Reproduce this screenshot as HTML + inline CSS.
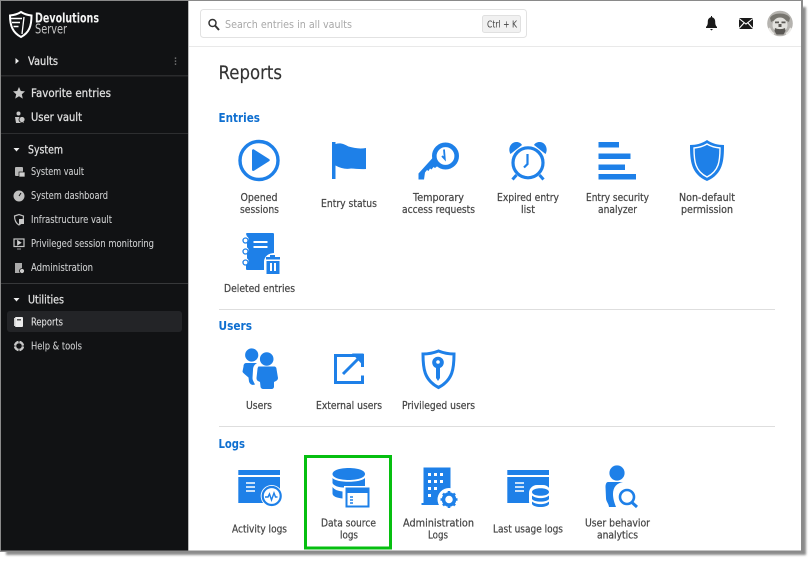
<!DOCTYPE html>
<html><head><meta charset="utf-8"><title>Reports</title>
<style>
html,body{margin:0;padding:0;background:#fff;width:812px;height:561px;overflow:hidden}
svg{position:absolute;left:0;top:0;display:block}
text{font-family:"DejaVu Sans","Liberation Sans",sans-serif}
.l{font-size:10.4px;fill:#454545;text-anchor:middle;font-weight:400;stroke:#454545;stroke-width:.22px}
.s{font-size:10.2px;fill:#cfd0d1;stroke:#cfd0d1;stroke-width:.08px}
.m{font-size:11.2px;fill:#e0e0e0;stroke:#e0e0e0;stroke-width:.25px}
.h{font-size:12.8px;fill:#0f6fd0;font-weight:bold}
.i{fill:#1e80e8}
</style></head><body>
<svg width="812" height="561" viewBox="0 0 812 561" xmlns="http://www.w3.org/2000/svg">
<defs><filter id="b" x="-5%" y="-5%" width="110%" height="110%"><feGaussianBlur stdDeviation="1"/></filter></defs>
<!-- frame + shadow -->
<rect x="6" y="7" width="800" height="548" fill="#8c8c8c" filter="url(#b)"/>
<rect x="0" y="0" width="803" height="552" fill="#8a8a8a"/>
<rect x="1" y="1" width="800" height="549.5" fill="#fff"/>
<rect x="1" y="1" width="187" height="549.5" fill="#111214"/>
<rect x="188" y="1" width="1" height="549.5" fill="#bbb"/>
<!-- header -->
<rect x="189" y="46" width="612" height="1" fill="#e9e9e9"/>
<rect x="200.500" y="9.500" width="326" height="28" rx="3" fill="#fff" stroke="#e2e2e2"/>
<circle cx="212.500" cy="23" r="3.500" fill="none" stroke="#333" stroke-width="1.500"/>
<path d="M215 25.500L219 30" stroke="#333" stroke-width="2"/>
<text x="225" y="28" font-size="10.800" fill="#a8a8a8" textLength="127" lengthAdjust="spacingAndGlyphs">Search entries in all vaults</text>
<rect x="482.500" y="15.500" width="38" height="17" rx="2" fill="#f1f1f1" stroke="#e0e0e0"/>
<text x="487" y="27.500" font-size="9.500" fill="#444" textLength="30" lengthAdjust="spacingAndGlyphs">Ctrl + K</text>
<path d="M706 27c1.500-1.500 1.800-3 1.800-5.500 0-2.500 1.500-4 3.200-4.300v-1.200h1v1.200c1.700.3 3.200 1.800 3.200 4.300 0 2.500.3 4 1.800 5.500v1h-11zM710 29h3l-1.500 1.500z" fill="#1a1a1a"/>
<rect x="739" y="18" width="14" height="11" fill="#1a1a1a"/>
<path d="M739 18.500l7 5.500 7-5.500M739 28.500l5-5.500M753 28.500l-5-5.500" fill="none" stroke="#fff" stroke-width="1.100"/>
<circle cx="780" cy="23.500" r="12.800" fill="#b5b3af"/>
<path d="M770 18c3-6 17-6 20 0l-1 4c-5-3-13-3-18 0z" fill="#77756f"/>
<circle cx="780" cy="25" r="7.500" fill="#e2e1dd"/>
<path d="M775 21.500h4v1.800h-4zM781.500 21.500h4v1.800h-4zM778.500 24h3v3h-3zM775 28c3 1.500 7 1.500 10 0l.5 3-2 3.500h-7l-2-3.500z" fill="#5a5854"/>
<path d="M769 28c2 4 3 5 5 6M791 28c-2 4-3 5-5 6" stroke="#ecebe8" stroke-width="2" fill="none"/>

<!-- sidebar -->
<path d="M10 15.500c5-.5 8-1.500 11-3.500 3 2 6 3 10.500 3.500 0 10-2 17-10.500 21.500-8.500-4.500-11-11.500-11-21.500z" fill="none" stroke="#fff" stroke-width="2"/>
<path d="M11 18.500h11M12 22.500h8M13.500 26.500h5" stroke="#fff" stroke-width="1.500" fill="none"/>
<path d="M24 17l-2 17" stroke="#fff" stroke-width="1.300"/>
<text x="35" y="22.500" font-size="13" font-weight="bold" fill="#f4f4f4" textLength="64" lengthAdjust="spacingAndGlyphs">Devolutions</text>
<text x="35" y="33.500" font-size="13" fill="#c4c4c4" textLength="32" lengthAdjust="spacingAndGlyphs">Server</text>

<path d="M15.500 58l3.500 3-3.500 3z" fill="#eee"/>
<text class="m" x="28" y="65" textLength="30" lengthAdjust="spacingAndGlyphs">Vaults</text>
<path d="M175.500 57.500v1.300M175.500 60.500v1.300M175.500 63.500v1.300" stroke="#888" stroke-width="1.400"/>
<rect x="1" y="75" width="187" height="1.500" fill="#2a2b2d"/>
<path d="M19 87l1.800 4 4.200.4-3.200 2.900 1 4.300-3.800-2.300-3.800 2.300 1-4.300-3.200-2.900 4.200-.4z" fill="#c8c8c8"/>
<text class="m" x="31" y="97" textLength="80" lengthAdjust="spacingAndGlyphs">Favorite entries</text>
<circle cx="18.500" cy="113.500" r="2" fill="#c8c8c8"/>
<path d="M15 117h6l1 5h2v1h-8z" fill="#c8c8c8"/><circle cx="22" cy="119.500" r="3" fill="#c8c8c8" stroke="#111" stroke-width=".8"/>
<text class="m" x="31" y="121" textLength="51" lengthAdjust="spacingAndGlyphs">User vault</text>
<rect x="1" y="133" width="187" height="1" fill="#2d2e30"/>

<path d="M13.500 148l6 0-3 3.500z" fill="#eee"/>
<text class="m" x="28" y="153.500" textLength="35" lengthAdjust="spacingAndGlyphs">System</text>
<rect x="15" y="167" width="8" height="9" rx="1" fill="#b8b8b8"/><rect x="19" y="172" width="6" height="5" fill="#d0d0d0" stroke="#111" stroke-width=".7"/>
<text class="s" x="31" y="175" textLength="53" lengthAdjust="spacingAndGlyphs">System vault</text>
<circle cx="19" cy="196" r="5.500" fill="#c0c0c0"/><path d="M19 196l2-3" stroke="#111" stroke-width="1"/>
<text class="s" x="31" y="199" textLength="77" lengthAdjust="spacingAndGlyphs">System dashboard</text>
<path d="M14.500 216l4.500-1.500 4.500 1.500c0 4-1 7-4.500 9-3.500-2-4.500-5-4.500-9z" fill="none" stroke="#c0c0c0" stroke-width="1.200"/><rect x="19" y="219" width="5" height="5" fill="#c8c8c8"/>
<text class="s" x="31" y="223" textLength="81" lengthAdjust="spacingAndGlyphs">Infrastructure vault</text>
<rect x="14" y="239" width="10" height="7.500" fill="none" stroke="#c8c8c8" stroke-width="1.200"/><path d="M17.500 240.500l3.500 2.300-3.500 2.200zM17 249h4" fill="#d0d0d0" stroke="#c8c8c8" stroke-width=".8"/>
<text class="s" x="31" y="247" textLength="123" lengthAdjust="spacingAndGlyphs">Privileged session monitoring</text>
<rect x="15" y="263" width="7" height="10" fill="#aaa"/><circle cx="22" cy="271" r="2.500" fill="#ccc" stroke="#111" stroke-width=".8"/>
<text class="s" x="31" y="271" textLength="62" lengthAdjust="spacingAndGlyphs">Administration</text>
<rect x="1" y="283" width="187" height="1" fill="#37383a"/>

<path d="M13.500 298l6 0-3 3.500z" fill="#eee"/>
<text class="m" x="28" y="303.500" textLength="36" lengthAdjust="spacingAndGlyphs">Utilities</text>
<rect x="7" y="311" width="175" height="21" rx="3" fill="#232427"/>
<rect x="15" y="317" width="8" height="10" rx="1" fill="#ececec"/><rect x="14" y="318" width="1.500" height="8" fill="#ccc"/><rect x="17" y="319" width="4" height="1.500" fill="#555"/>
<text class="s" x="31" y="325.500" textLength="32" lengthAdjust="spacingAndGlyphs" style="fill:#eaeaea">Reports</text>
<circle cx="19" cy="346" r="4" fill="none" stroke="#c8c8c8" stroke-width="2.400"/>
<path d="M19 340.500v2M19 349.500v2M13.500 346h2M22.500 346h2" stroke="#111" stroke-width="1"/>
<text class="s" x="31" y="349.500" textLength="51" lengthAdjust="spacingAndGlyphs">Help &amp; tools</text>

<!-- page titles -->
<text x="218.500" y="79" font-size="18.500" fill="#333" stroke="#333" stroke-width=".15" textLength="63.500" lengthAdjust="spacingAndGlyphs">Reports</text>
<text class="h" x="218.500" y="122" textLength="41.500" lengthAdjust="spacingAndGlyphs">Entries</text>
<text class="h" x="218.500" y="330" textLength="33.500" lengthAdjust="spacingAndGlyphs">Users</text>
<text class="h" x="218.500" y="448" textLength="26.500" lengthAdjust="spacingAndGlyphs">Logs</text>
<rect x="219" y="309" width="556" height="1" fill="#dedede"/>
<rect x="219" y="426" width="556" height="1" fill="#dedede"/>

<!-- Entries icons -->
<circle cx="259" cy="160.500" r="19" fill="none" stroke="#1e80e8" stroke-width="3.400"/>
<path class="i" d="M252 150.500c0-1 1-1.500 2-1l15 9.500c1 .6 1 1.700 0 2.300l-15 9.500c-1 .5-2 0-2-1z"/>
<path class="i" d="M332 142h3.500v37H332zM335.500 144c5-1.500 8.500 0 13 2.500 6 1.700 11 2.500 17.500 1.500v21c-6 .5-11-.5-15-.5-5 1-10 0-15.500-3z"/>
<circle cx="445.500" cy="156" r="11.200" fill="none" stroke="#1e80e8" stroke-width="4.600"/>
<path class="i" d="M433 157.500l4.500 8.500-2.500 2-1.500-1-2 2.500-1.500-1-1.500 2.500-1.500-1-2 2.500-1 7h-5.500v-6z"/>
<path d="M444 149.500l.8 9.500-2.800-3" fill="none" stroke="#1e80e8" stroke-width="1.800"/>
<circle cx="245.500" cy="240.500" r="2.500" fill="none" stroke="#1e80e8" stroke-width="1.300"/><circle cx="245.500" cy="251.500" r="2.500" fill="none" stroke="#1e80e8" stroke-width="1.300"/><circle cx="245.500" cy="262.500" r="2.500" fill="none" stroke="#1e80e8" stroke-width="1.300"/>
<path class="i" d="M246 234c0-.5.500-1 1-1h26c.500 0 1 .5 1 1v19c-6 .5-9 3-10 8v9h-17c-.5 0-1-.5-1-1v-4l1-.5a3.500 3.500 0 0 0 0-6v-5a3.500 3.500 0 0 0 0-6v-5a3.500 3.500 0 0 0 0-6z"/>
<rect x="253.500" y="241" width="14" height="2" fill="#fff"/><rect x="253.500" y="246" width="14" height="2" fill="#fff"/>
<path class="i" d="M266 257h4v-2h5v2h5v2.500h-14zM266.500 261h13v13h-13z"/>
<rect x="270" y="263" width="2" height="8" fill="#fff"/><rect x="274" y="263" width="2" height="8" fill="#fff"/>

<circle cx="528" cy="162.800" r="15" fill="none" stroke="#1e80e8" stroke-width="3.200"/>
<path d="M527.500 154v10l-3.500 3.500" fill="none" stroke="#1e80e8" stroke-width="2.200"/>
<path class="i" d="M510.500 154c-3-5 0-12 6-12 2.500 0 4.500 1.200 5.500 3zM545.500 154c3-5 0-12-6-12-2.500 0-4.500 1.200-5.500 3z"/>
<path d="M516.500 175l-4 4.500M539.500 175l4 4.500" stroke="#1e80e8" stroke-width="3"/>

<rect class="i" x="598.500" y="142" width="20.500" height="5.500"/>
<rect class="i" x="598.500" y="153.500" width="32" height="5.500"/>
<rect class="i" x="598.500" y="164.500" width="26.500" height="5.500"/>
<rect class="i" x="598.500" y="174" width="37.500" height="5.500"/>

<path class="i" d="M690 145c6 0 12-1.500 17-5 5 3.500 11 5 17 5 0 16-1 29-17 36-16-7-17-20-17-36z"/>
<path d="M694 148c5-.5 9-1.500 13-4 4 2.500 8 3.500 13 4 0 13-1 23-13 29-12-6-13-16-13-29z" fill="#1e80e8" stroke="#fff" stroke-width="1.400"/>

<!-- Users icons -->
<circle class="i" cx="251.700" cy="355" r="6.600"/>
<circle class="i" cx="266.700" cy="359" r="6.800"/>
<path class="i" d="M245 363h12c-3 2-4 4-4 7l-.5 8c0 2 1 3.500 2.500 6.500-3 1-5 0-6-3l-.5-4-3.500-3c-1-1-2.500-2-2.500-3l1-5c0-2 1-3.500 2.500-3.500z"/>
<path class="i" d="M258.500 366.500h15.500c1.500 0 2.500 1 2.500 2.500l1.500 9c0 1.500-1 2.500-2 3l-2 1v4.500c0 1.500-1 2.500-2.500 2.500h-8c-1.500 0-3-1-3-2.500l-.5-4.500-2-1c-1-.5-1.500-1.500-1.500-3l1-9c0-1.500 1-2.500 1-2.500z"/>
<path d="M362.500 367v-11.500h-27v27h27v-7" fill="none" stroke="#1e80e8" stroke-width="3"/>
<path d="M343 374l18-18" stroke="#1e80e8" stroke-width="3"/>
<path class="i" d="M352 353.500h11.500V366z"/>
<path d="M438.500 351c5 2 10 3 15.500 3 0 14-1 26-15.500 33.500-14.500-7.500-15.500-19.500-15.500-33.500 5.500 0 10.500-1 15.500-3z" fill="#fff" stroke="#1e80e8" stroke-width="3"/>
<circle cx="438" cy="362.500" r="5.800" fill="#1e80e8"/><circle cx="438" cy="362" r="1.800" fill="#fff"/>
<path class="i" d="M436 366h4v12l-2 3-2-3z"/>

<!-- Logs icons -->
<rect class="i" x="238.300" y="470" width="41.700" height="5"/>
<rect class="i" x="238.300" y="477" width="41.700" height="26"/>
<path d="M246 483h9M246 487h9M246 491h9" stroke="#fff" stroke-width="1.500"/>
<circle cx="271.700" cy="496" r="11" fill="#fff"/>
<circle cx="271.700" cy="496" r="9" fill="none" stroke="#1e80e8" stroke-width="2.200"/>
<path d="M265 497h3l1.500-3 2 6 2.500-7 1.500 4h2" fill="none" stroke="#1e80e8" stroke-width="1.400"/>

<path class="i" d="M332.500 474c0-8 32.500-8 32.500 0 0 8-32.500 8-32.500 0z"/>
<path class="i" d="M332.500 478c4 5 28 5 32.500 0v8h-20v1.500h-2c-4 0-10-2-10.500-4.500z"/>
<path class="i" d="M332.500 487c2 3 6 4 10 4.500v7c-5-.5-10-2-10-5z"/>
<rect x="344" y="486" width="27" height="23" fill="#fff"/>
<rect x="346.500" y="488.500" width="22" height="18" fill="#fff" stroke="#1e80e8" stroke-width="2"/>
<rect class="i" x="346" y="488" width="23" height="5"/>
<path d="M350 497h3M350 500h3M350 503h3" stroke="#1e80e8" stroke-width="1.500"/>

<path class="i" d="M423.500 467.500h27V490a11 11 0 0 0-10 15h-19v-2h2z"/>
<g fill="#fff"><rect x="428" y="473" width="3" height="3"/><rect x="434" y="473" width="3" height="3"/><rect x="440" y="473" width="3" height="3"/><rect x="428" y="480" width="3" height="3"/><rect x="434" y="480" width="3" height="3"/><rect x="440" y="480" width="3" height="3"/><rect x="428" y="487" width="3" height="3"/><rect x="434" y="487" width="3" height="3"/><rect x="428" y="494" width="3" height="3"/></g>
<circle cx="449" cy="499.500" r="11.500" fill="#fff"/>
<circle cx="449" cy="499.500" r="5.500" fill="none" stroke="#1e80e8" stroke-width="3.500"/>
<path d="M449 491v3M449 505v3M440.500 499.500h3M454.500 499.500h3M443 493.500l2 2M453 503.500l2 2M455 493.500l-2 2M445 503.500l-2 2" stroke="#1e80e8" stroke-width="2.600"/>

<rect class="i" x="507.300" y="470" width="41.700" height="5"/>
<rect class="i" x="507.300" y="477" width="41.700" height="26"/>
<path d="M515 483h9M515 487h9M515 491h9" stroke="#fff" stroke-width="1.500"/>
<rect x="529" y="485" width="22" height="24" rx="8" fill="#fff"/>
<path class="i" d="M532 492c0-5 17-5 17 0 0 5-17 5-17 0zM532 495.500c4 3.500 13 3.500 17 0v3.500c-2 3.500-15 3.500-17 0zM532 501.500c4 3.500 13 3.500 17 0v2.500c-2 4-15 4-17 0z"/>

<circle class="i" cx="617" cy="473" r="7.600"/>
<path class="i" d="M608 482h15c-6 1-10 5-10 12 0 4 1 8 3 13h-7c-.5-4-3-5.500-3-9l-.5-11c0-3 1-5 2.500-5z"/>
<circle cx="627" cy="497" r="7" fill="#fff" stroke="#1e80e8" stroke-width="2.600"/>
<path d="M632 502.500l5 4.500" stroke="#1e80e8" stroke-width="3"/>

<!-- highlight -->
<rect x="305.500" y="456.500" width="85" height="91.500" fill="none" stroke="#06bf10" stroke-width="3"/>

<!-- labels -->
<text class="l" x="259" y="201" textLength="37" lengthAdjust="spacingAndGlyphs">Opened</text>
<text class="l" x="259.500" y="213" textLength="39" lengthAdjust="spacingAndGlyphs">sessions</text>
<text class="l" x="349" y="207" textLength="56" lengthAdjust="spacingAndGlyphs">Entry status</text>
<text class="l" x="438.500" y="201" textLength="51" lengthAdjust="spacingAndGlyphs">Temporary</text>
<text class="l" x="438.500" y="213" textLength="73" lengthAdjust="spacingAndGlyphs">access requests</text>
<text class="l" x="528" y="201" textLength="62" lengthAdjust="spacingAndGlyphs">Expired entry</text>
<text class="l" x="528" y="213" textLength="14" lengthAdjust="spacingAndGlyphs">list</text>
<text class="l" x="617.500" y="201" textLength="63" lengthAdjust="spacingAndGlyphs">Entry security</text>
<text class="l" x="617.500" y="213" textLength="39" lengthAdjust="spacingAndGlyphs">analyzer</text>
<text class="l" x="707" y="201" textLength="56" lengthAdjust="spacingAndGlyphs">Non-default</text>
<text class="l" x="707" y="213" textLength="52" lengthAdjust="spacingAndGlyphs">permission</text>
<text class="l" x="259.500" y="292" textLength="71" lengthAdjust="spacingAndGlyphs">Deleted entries</text>
<text class="l" x="259" y="409" textLength="26" lengthAdjust="spacingAndGlyphs">Users</text>
<text class="l" x="349" y="409" textLength="66" lengthAdjust="spacingAndGlyphs">External users</text>
<text class="l" x="438.500" y="409" textLength="73" lengthAdjust="spacingAndGlyphs">Privileged users</text>
<text class="l" x="259.500" y="532.500" textLength="55" lengthAdjust="spacingAndGlyphs">Activity logs</text>
<text class="l" x="348.500" y="526.500" textLength="55" lengthAdjust="spacingAndGlyphs">Data source</text>
<text class="l" x="349" y="538.500" textLength="18" lengthAdjust="spacingAndGlyphs">logs</text>
<text class="l" x="438.500" y="526.500" textLength="71" lengthAdjust="spacingAndGlyphs">Administration</text>
<text class="l" x="438" y="538.500" textLength="20" lengthAdjust="spacingAndGlyphs">Logs</text>
<text class="l" x="528" y="532.500" textLength="70" lengthAdjust="spacingAndGlyphs">Last usage logs</text>
<text class="l" x="617.500" y="526.500" textLength="65" lengthAdjust="spacingAndGlyphs">User behavior</text>
<text class="l" x="617.500" y="538.500" textLength="41" lengthAdjust="spacingAndGlyphs">analytics</text>
</svg>
</body></html>
